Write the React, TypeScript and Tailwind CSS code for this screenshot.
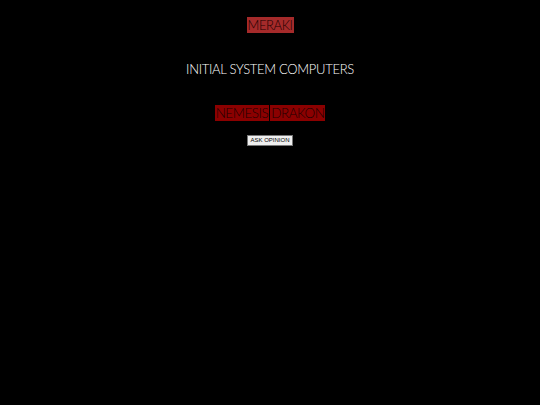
export default function App() {
  return (
    <div className="min-h-[405px] w-full bg-black text-center leading-none font-['Lato','Liberation_Sans',sans-serif]">
      <div className="flex justify-center pt-[17px]">
        <span className="block bg-[#a52a2a] px-[1px] text-[13px] leading-[16px] tracking-[-0.4px] font-light text-[#1a0000]">
          MERAKI
        </span>
      </div>
      <h1 className="mt-[28px] text-[13px] leading-[16px] tracking-[-0.3px] font-light text-white">INITIAL SYSTEM COMPUTERS</h1>
      <div className="mt-[28px] flex justify-center gap-[1px]">
        <span className="bg-[#8b0000] px-[1px] text-[13.5px] leading-[16px] tracking-[-0.5px] font-light text-[#1a0000]">NEMESIS</span>
        <span className="bg-[#8b0000] px-[1px] text-[13.5px] leading-[16px] tracking-[-0.5px] font-light text-[#1a0000]">DRAKON</span>
      </div>
      <div className="mt-[14px] flex justify-center">
        <button className="border border-[#767676] bg-[#efefef] px-[2px] py-[1px] font-['Liberation_Sans',sans-serif] text-[6px] leading-[7px] text-black">
          ASK OPINION
        </button>
      </div>
    </div>
  );
}
